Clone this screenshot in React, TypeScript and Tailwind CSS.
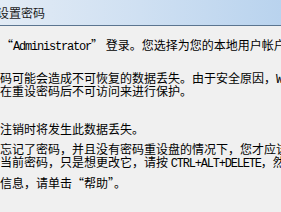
import React from "react";

const cjk = "font-['Noto_Sans_CJK_SC',sans-serif]";
const mono = "font-['Liberation_Mono',monospace] text-[12px] tracking-[-1.2px]";

function Line({ children, className = "" }: { children: React.ReactNode; className?: string }) {
  return (
    <div className={`whitespace-nowrap h-[13px] leading-[13px] text-[12px] text-black ${className}`}>
      {children}
    </div>
  );
}

export default function App() {
  return (
    <div className={`w-[281px] h-[212px] overflow-hidden bg-[#f0f0f0] ${cjk}`}>
      {/* Title bar */}
      <div className="h-[25px] flex items-center bg-gradient-to-r from-[#e2ebf5] via-[#cfe0f2] to-[#b9d3ee]">
        <span className="ml-[-3px] text-[12px] text-[#1b1b1b]">设置密码</span>
      </div>
      <div className="h-px bg-[#5b7590]" />

      <div className="pt-[12px]">
        <Line className="ml-[1px]">
          “<span className={mono}>Administrator</span>” 登录。您选择为您的本地用户帐户
        </Line>

        <div className="mt-[20px]">
          <Line>
            码可能会造成不可恢复的数据丢失。由于安全原因，<span className={mono}>Windows</span>
          </Line>
          <Line>在重设密码后不可访问来进行保护。</Line>
        </div>

        <Line className="mt-[25px]">注销时将发生此数据丢失。</Line>

        <div className="mt-[7px]">
          <Line>忘记了密码，并且没有密码重设盘的情况下，您才应该</Line>
          <Line>
            当前密码，只是想更改它，请按 <span className={mono}>CTRL+ALT+DELETE</span>，然后
          </Line>
        </div>

        <Line className="mt-[8px]">信息，请单击“帮助”。</Line>
      </div>
    </div>
  );
}
